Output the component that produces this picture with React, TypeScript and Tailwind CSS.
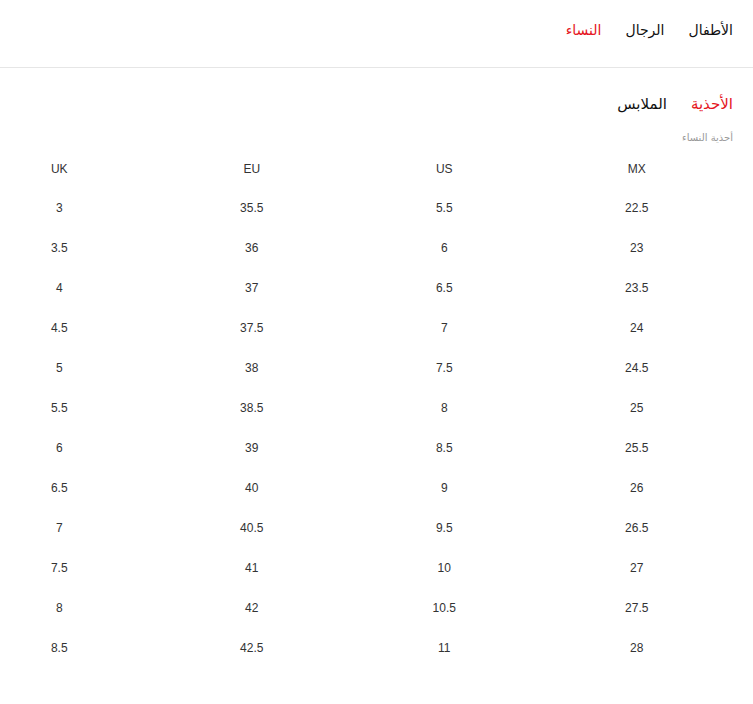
import React, { useState } from 'react';

const rows: [string, string, string, string][] = [
  ['22.5', '5.5', '35.5', '3'],
  ['23', '6', '36', '3.5'],
  ['23.5', '6.5', '37', '4'],
  ['24', '7', '37.5', '4.5'],
  ['24.5', '7.5', '38', '5'],
  ['25', '8', '38.5', '5.5'],
  ['25.5', '8.5', '39', '6'],
  ['26', '9', '40', '6.5'],
  ['26.5', '9.5', '40.5', '7'],
  ['27', '10', '41', '7.5'],
  ['27.5', '10.5', '42', '8'],
  ['28', '11', '42.5', '8.5'],
];

const genders = ['الأطفال', 'الرجال', 'النساء'];
const categories = ['الأحذية', 'الملابس'];

const App: React.FC = () => {
  const [gender, setGender] = useState('النساء');
  const [category, setCategory] = useState('الأحذية');

  return (
    <div dir="rtl" className="min-h-screen bg-white text-[#222] font-['DejaVu_Sans',sans-serif]">
      <div className="h-[68px] border-b border-[#e6e6e6] flex items-center gap-6 px-5 pb-[7px]">
        {genders.map((g) => (
          <button
            key={g}
            onClick={() => setGender(g)}
            className={`text-[14px] ${gender === g ? 'text-[#e5141d]' : 'text-[#111]'}`}
          >
            {g}
          </button>
        ))}
      </div>

      <div className="px-5 pt-[25px]">
        <div className="flex items-center gap-6 h-[22px]">
          {categories.map((c) => (
            <button
              key={c}
              onClick={() => setCategory(c)}
              className={`text-[15px] ${category === c ? 'text-[#e5141d]' : 'text-[#111]'}`}
            >
              {c}
            </button>
          ))}
        </div>
        <p className="mt-[15px] text-[10px] text-[#999]">أحذية النساء</p>

        {/* size table */}
        <div className="w-[770px] mt-[5px] font-['Liberation_Sans',sans-serif] text-[12px] text-[#333]">
          <div className="grid grid-cols-4 h-[38px] items-center text-center">
            <div>MX</div>
            <div>US</div>
            <div>EU</div>
            <div>UK</div>
          </div>
          {rows.map((r, i) => (
            <div key={i} className="grid grid-cols-4 h-[40px] items-center text-center">
              {r.map((v, j) => (
                <div key={j}>{v}</div>
              ))}
            </div>
          ))}
        </div>
      </div>
    </div>
  );
};

export default App;
